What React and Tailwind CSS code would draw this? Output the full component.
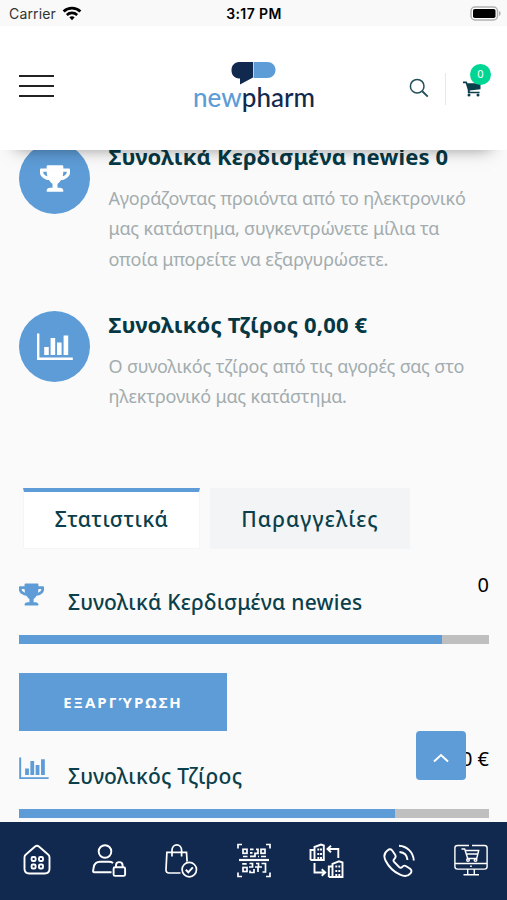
import { FaTrophy } from 'react-icons/fa';

const ChartIcon = ({ className }) => (
    <svg viewBox="0 0 36 28" fill="currentColor" className={className}>
        <path d="M0 0.5h2.4v24h33.4v2.4H0z" />
        <path d="M7.2 14h4.6v8H7.2zM13.6 5h4.6v17h-4.6zM20 9.600h4.600V22H20zM26.600 2.600h4.600V22h-4.600z" />
    </svg>
);

const WifiIcon = () => (
    <svg viewBox="0 0 20 15" className="w-[20px] h-[15px]" fill="none" stroke="#000" strokeWidth="2.7">
        <path d="M1.600 5.500C6.400 1 13.600 1 18.400 5.500" />
        <path d="M4.800 8.900C7.800 6.200 12.200 6.200 15.200 8.900" />
        <path d="M7.300 11.200C8.900 9.900 11.100 9.900 12.700 11.200L10 14.200z" fill="#000" stroke="none" />
    </svg>
);

const BatteryIcon = () => (
    <svg viewBox="0 0 32 16" className="w-[32px] h-[16px]">
        <rect x="1" y="1" width="26.500" height="13" rx="4" fill="#fff" stroke="#b0b0b0" strokeWidth="1.500" />
        <rect x="3" y="3" width="22.500" height="9" rx="1.800" fill="#000" />
        <path d="M29 5c2.200 0.800 2.200 4.200 0 5z" fill="#b0b0b0" />
    </svg>
);

const CartIcon = () => (
    <svg viewBox="0 0 18 16" className="w-[18px] h-[16px]" fill="#0b3f4b">
        <path d="M0 0.500h3.700l0.800 1.700H17.500V8.300L6.800 9.500v1.300h9.800v1.500H4.800V9L2.700 2.200H0z" />
        <circle cx="6" cy="13.900" r="1.500" />
        <circle cx="15" cy="13.900" r="1.500" />
    </svg>
);

const SearchIcon = () => (
    <svg viewBox="0 0 20 20" className="w-[20px] h-[20px]" fill="none" stroke="#24505a" strokeWidth="1.500">
        <circle cx="8.200" cy="8.200" r="6.800" />
        <path d="M13 13l5.800 5.600" strokeWidth="1.900" />
    </svg>
);

const HomeIcon = () => (
    <svg viewBox="0 0 36 36" className="w-9 h-9" fill="none" stroke="#fff" strokeWidth="1.900">
        <path d="M5.500 15.200c0-1.200 0.500-2 1.400-2.700L15.800 4.700c1.400-1.100 3-1.100 4.400 0l8.900 7.800c0.900 0.700 1.400 1.500 1.400 2.700v11.600c0 3-1.700 4.700-4.700 4.700H10.200c-3 0-4.700-1.700-4.700-4.700z" />
        <rect x="12.600" y="15" width="4" height="4" rx="1.300" />
        <rect x="20" y="15" width="4" height="4" rx="1.300" />
        <rect x="12.600" y="22.500" width="4" height="4" rx="1.300" />
        <rect x="20" y="22.500" width="4" height="4" rx="1.300" />
    </svg>
);

const AccountIcon = () => (
    <svg viewBox="0 0 36 36" className="w-9 h-9" fill="none" stroke="#fff" strokeWidth="1.900">
        <circle cx="14" cy="9.500" r="6.300" />
        <path d="M20.500 30.300H3.200c-0.800 0-1.200-0.500-1.100-1.300l0.500-3.200c0.500-3.700 3-6 6.600-6h8.600c1.800 0 3.200 0.400 4.300 1.200" />
        <rect x="22.600" y="25.300" width="11.500" height="8.600" rx="1.500" />
        <path d="M25 25.300v-2c0-4.300 6.600-4.300 6.600 0v2" />
    </svg>
);

const OrdersIcon = () => (
    <svg viewBox="0 0 36 36" className="w-9 h-9" fill="none" stroke="#fff" strokeWidth="1.700">
        <path d="M16.500 31H5c-2 0-3.100-1.200-3-3.200L2.900 10.300h19.600l0.600 9.300" />
        <path d="M8 14.500V8.500c0-7.500 9.600-7.500 9.600 0v6" />
        <circle cx="25.300" cy="27.600" r="7.200" />
        <path d="M21.800 27.800l2.500 2.500 4.500-5" strokeWidth="2" />
    </svg>
);

const ScanIcon = () => (
    <svg viewBox="0 0 36 36" className="w-9 h-9" fill="none" stroke="#fff" strokeWidth="1.700">
        <path d="M2 6.500V2.500h4M30 2.500h4v4M34 30.500v4h-4M6 34.500H2v-4" />
        <path d="M3 18h30" strokeWidth="2.200" />
        <rect x="7" y="7.300" width="4" height="4" />
        <rect x="25" y="7.300" width="4" height="4" />
        <path d="M14 7.300h3.500M20 7.300h2v4h-3v3h-5M14 10.800h2.500M7 14.500h4.500M25 14.500h5M22 14.500h1" />
        <rect x="7" y="25.500" width="4" height="4" />
        <path d="M6.200 21.800h4.500M13.500 21.500h3v3.500h-3.500M14 28.500v2h4v-3.500M20 21.500h2.500v3.500h-3.500M25.500 21.500h4v8.500h-3M26 25h-4v5" />
    </svg>
);

const BranchIcon = () => (
    <svg viewBox="0 0 36 36" className="w-9 h-9" fill="none" stroke="#fff" strokeWidth="1.900">
        <path d="M2.500 18V8h4M2.500 18h13.300V3.500L13 2.500 6.500 5v13" />
        <path d="M10.300 6.500v2M10.300 11v2M13 6.500v2M13 11v2M10.300 18v-3M13 18v-3" />
        <path d="M20.800 35V24.500h3.700M20.800 35h13.700V20.500L31 19.300l-6.500 2.500V35" />
        <path d="M28.300 23.500v2M28.300 28v2M31.300 23.500v2M31.300 28v2M28.300 35v-3M31.300 35v-3" />
        <path d="M30.300 16V7H20M23 3.800L19.500 7l3.500 3.300" />
        <path d="M6.500 21v9.500h10M13.700 27.300l3.500 3.200-3.500 3.200" />
    </svg>
);

const PhoneIcon = () => (
    <svg viewBox="0 0 36 36" className="w-9 h-9" fill="none" stroke="#fff" strokeWidth="1.900">
        <path d="M6.700 8.300c1.700-1.500 3.500-1.300 4.700 0.400l2.700 4.100c0.900 1.500 0.600 2.800-0.600 3.900-1.300 1.100-1.300 2-0.400 3.200l5 5.100c1.200 1 2.200 1 3.200-0.200 1.100-1.300 2.500-1.500 3.900-0.600l3.900 2.600c1.600 1.200 1.800 3 0.400 4.600-2.500 3-6.500 3.200-10.400 1.300C12.500 29.700 7.500 24.500 4.500 18.500c-2-4.100-1.500-7.500 2.200-10.200z" />
        <path d="M18 3.800c8 0.300 14.300 6.500 14.800 14.700" />
        <path d="M18.500 10c4.500 0.400 7.600 3.500 8 8" />
    </svg>
);

const ShopIcon = () => (
    <svg viewBox="0 0 36 36" className="w-9 h-9" fill="none" stroke="#fff" strokeWidth="1.400">
        <path d="M16 3.500H4.500c-1.700 0-2.600 1-2.600 2.600v18.400c0 1.700 0.900 2.600 2.600 2.600h27c1.700 0 2.600-0.900 2.600-2.600V6.100c0-1.600-0.900-2.600-2.600-2.600H19" />
        <path d="M2 21.500h32M17.200 24.300h1.600M14.700 27v5.500M21.300 27v5.500M10.500 32.800h15.500" />
        <path d="M8.500 7h3.200l3 9.500h9l2-8H12.500M13.200 12h11.500" />
        <circle cx="15" cy="18" r="1.300" />
        <circle cx="22.500" cy="18" r="1.300" />
    </svg>
);

const navItems = [
    { name: 'home', Icon: HomeIcon },
    { name: 'account', Icon: AccountIcon },
    { name: 'orders', Icon: OrdersIcon },
    { name: 'scan', Icon: ScanIcon },
    { name: 'branches', Icon: BranchIcon },
    { name: 'phone', Icon: PhoneIcon },
    { name: 'shop', Icon: ShopIcon },
];

const StatusBar = () => (
    <div className="h-[26px] shrink-0 bg-[#f9f9f9] grid grid-cols-3 items-center pl-[9px] pr-[5px] text-black font-['Inter',sans-serif]">
        <div className="flex items-center gap-[6px]">
            <span className="text-[#333] text-[14px] tracking-[0.15px]">Carrier</span>
            <WifiIcon />
        </div>
        <span className="text-center font-semibold text-[14px] tracking-[0.4px] -ml-[3px]">3:17 PM</span>
        <div className="flex justify-end pt-[1px]"><BatteryIcon /></div>
    </div>
);

const Header = () => (
    <header className="relative z-10 h-[124px] shrink-0 bg-white grid grid-cols-[1fr_auto_1fr] items-center pl-[19px] pr-[16px] shadow-[0_14px_16px_-16px_rgba(0,0,0,0.5)]">
        <button className="flex flex-col gap-[8px] w-[35px] -mt-[4px]">
            <span className="h-[2px] bg-[#222]" />
            <span className="h-[2px] bg-[#222]" />
            <span className="h-[2px] bg-[#222]" />
        </button>
        <div className="flex flex-col items-center -ml-[2px]">
            <svg viewBox="0 0 45 23" className="w-[45px] h-[23px]">
                <path d="M22 0v15.500L9 22.500v-6H8C3.500 16.500 0.500 13 0.500 8.300S3.500 0 8 0z" fill="#12294f" />
                <path d="M22.600 0H36c5 0 8.500 3.500 8.500 8s-3.500 8-8.500 8H22.600z" fill="#5d9cd6" />
            </svg>
            <span className="font-['Lato'] font-medium text-[26px] leading-[24px] mb-[6px] text-[#12294f]">
                <span className="text-[#5d9cd6]">new</span>pharm
            </span>
        </div>
        <div className="flex items-center justify-end">
            <SearchIcon />
            <span className="w-px h-[32px] bg-[#e6e8ea] ml-[16px] mr-[17px] mt-[2px]" />
            <div className="relative w-[28px] h-[20px] pt-[3px]">
                <CartIcon />
                <span className="absolute left-[7px] -top-[14px] w-[21px] h-[21px] rounded-full bg-[#00d694] text-white text-[11px] flex items-center justify-center">0</span>
            </div>
        </div>
    </header>
);

const Summary = ({ icon, title, children }) => (
    <div className="flex gap-[18px]">
        <div className="w-[71px] h-[71px] shrink-0 rounded-full bg-[#5d9cd6] text-white flex items-center justify-center">{icon}</div>
        <div className="flex-1 pl-[0.5px] whitespace-nowrap">
            <h3 className="-mt-[2px] text-[#063844] text-[22px] font-bold leading-[30px] tracking-[0.17px]">{title}</h3>
            <div className="mt-[12px] text-[#a3acae] text-[18px] leading-[30.4px] tracking-[-0.16px]">{children}</div>
        </div>
    </div>
);

const Stat = ({ icon, title, value, percent }) => (
    <div>
        <div className="flex h-[60px]">
            <div className="w-[49px] text-[#5d9cd6]">{icon}</div>
            <h4 className="flex-1 mt-[12px] leading-[30px] text-[#0b3f4b] text-[21px] font-medium tracking-[0.25px] whitespace-nowrap">{title}</h4>
            <span className="text-[20px] leading-[20px] text-black">{value}</span>
        </div>
        <div className="h-[9px] bg-[#bfbfbf]">
            <div className="h-full bg-[#5d9cd6]" style={{ width: `${percent}%` }} />
        </div>
    </div>
);

const App = () => {
    return (
        <div className="relative h-[900px] w-[507px] flex flex-col overflow-hidden bg-[#fafafa] font-['Noto_Sans',sans-serif]">
            <StatusBar />
            <Header />

            <main className="flex-1 min-h-0 overflow-hidden">
                <div className="-mt-[7px] pl-[19px] pr-[18px]">
                    <div className="h-[168px]">
                        <Summary icon={<FaTrophy className="w-[30px] h-[27px]" />} title="Συνολικά Κερδισμένα newies 0">
                            <p>Αγοράζοντας προιόντα από το ηλεκτρονικό</p>
                            <p>μας κατάστημα, συγκεντρώνετε μίλια τα</p>
                            <p>οποία μπορείτε να εξαργυρώσετε.</p>
                        </Summary>
                    </div>
                    <div className="h-[177px]">
                        <Summary icon={<ChartIcon className="w-[36px] h-[28px]" />} title="Συνολικός Τζίρος 0,00 €">
                            <p>Ο συνολικός τζίρος από τις αγορές σας στο</p>
                            <p>ηλεκτρονικό μας κατάστημα.</p>
                        </Summary>
                    </div>

                    <div className="flex gap-[10px] pl-[4px] text-[#0b3f4b] text-[21px] font-medium whitespace-nowrap">
                        <button className="w-[177px] h-[61px] bg-white border border-[#f5f5f5] border-t-4 border-t-[#5d9cd6] tracking-[0.45px]">Στατιστικά</button>
                        <button className="w-[200px] h-[61px] bg-[#f2f4f5] pt-[3px] tracking-[1.1px]">Παραγγελίες</button>
                    </div>

                    <div className="mt-[26px]">
                        <Stat icon={<FaTrophy className="w-[25px] h-[23px] mt-[8px]" />} title="Συνολικά Κερδισμένα newies" value="0" percent={90} />
                    </div>
                    <button className="mt-[29px] w-[208px] h-[58px] bg-[#5d9cd6] text-white text-[15px] font-bold tracking-[2px]">ΕΞΑΡΓΎΡΩΣΗ</button>
                    <div className="mt-[18px]">
                        <Stat icon={<ChartIcon className="w-[30px] h-[23px] mt-[8px]" />} title="Συνολικός Τζίρος" value="0,00 €" percent={80} />
                    </div>
                </div>
            </main>

            <button className="absolute left-[416px] top-[731px] w-[50px] h-[49px] rounded-[4px] bg-[#5d9cd6] flex items-center justify-center">
                <svg viewBox="0 0 16 10" className="w-[16px] h-[10px] mt-[4px]" fill="none" stroke="#fff" strokeWidth="2">
                    <path d="M1 8.500l7-6.500 7 6.500" />
                </svg>
            </button>

            <nav className="h-[78px] shrink-0 bg-[#12294f] flex items-center justify-between pl-[19px] pr-[18px] pb-[2px]">
                {navItems.map(({ name, Icon }) => (
                    <button key={name}><Icon /></button>
                ))}
            </nav>
        </div>
    );
};

export default App;
